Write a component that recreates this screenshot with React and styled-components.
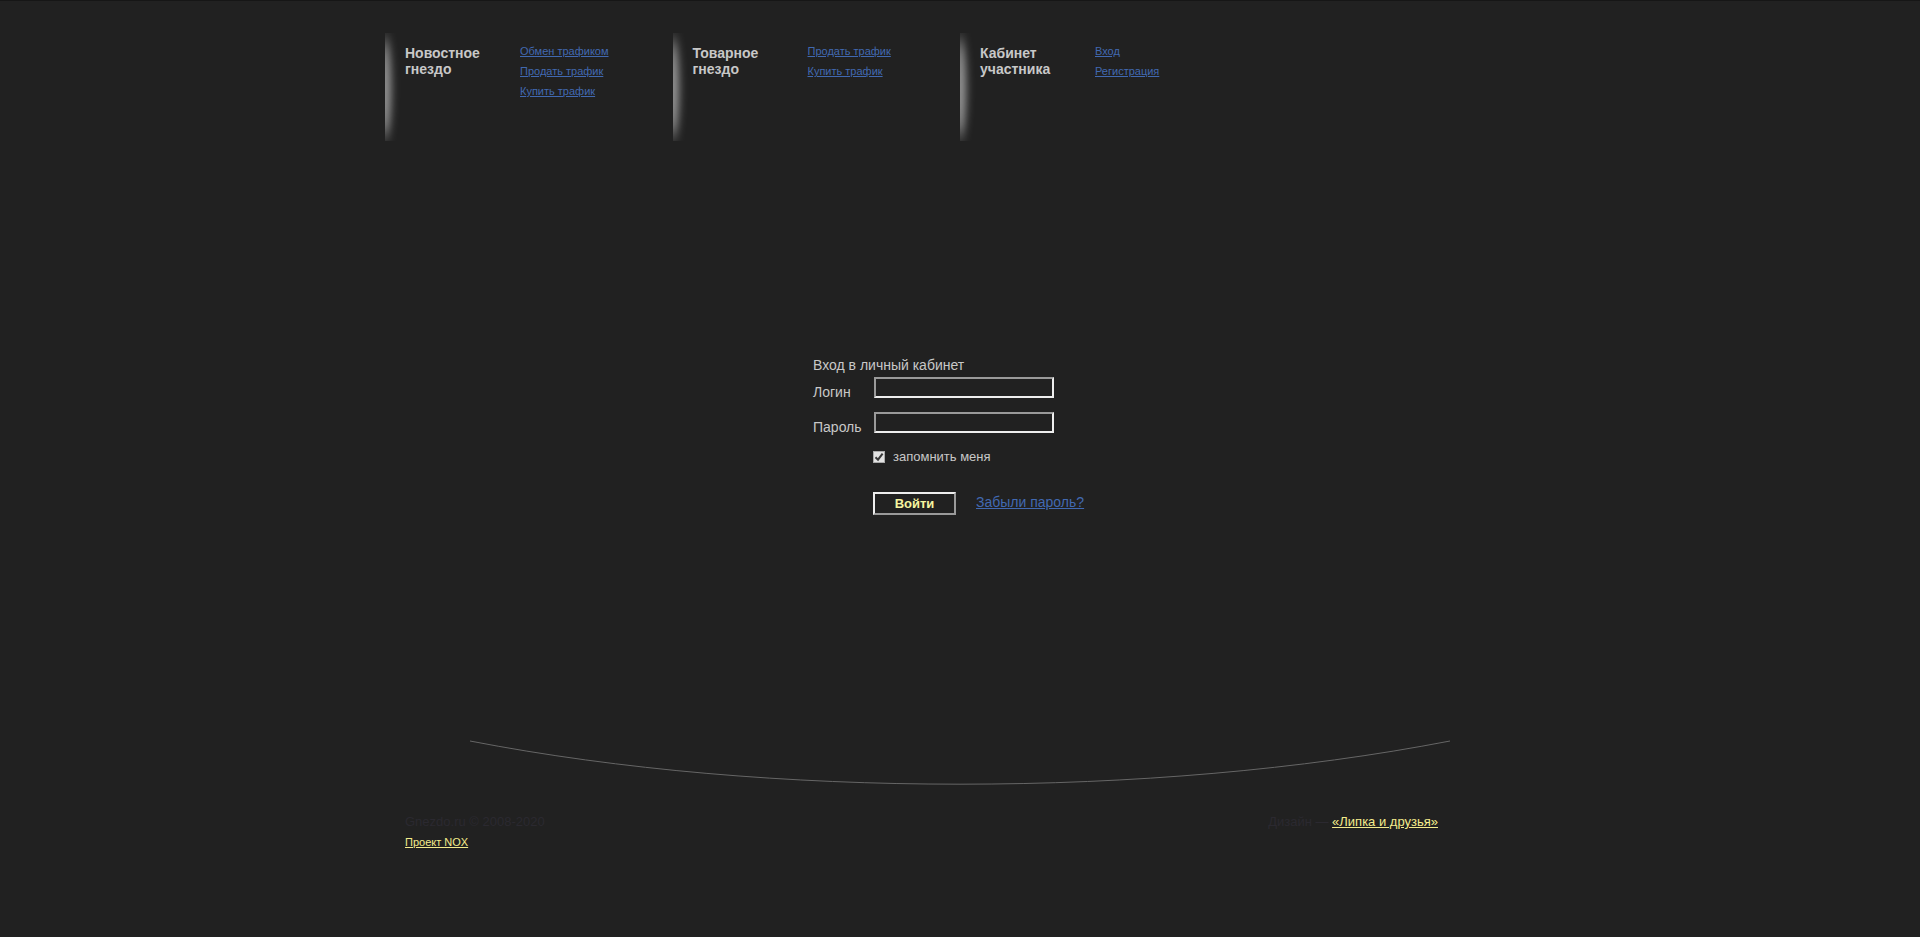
import React from "react";
import styled, { createGlobalStyle } from "styled-components";

const GlobalStyle = createGlobalStyle`
  body {
    margin: 0;
    background: #212121;
    color: #c8c8c8;
    font: 14px/16px "Liberation Sans", Arial, sans-serif;
  }
`;

const Page = styled.div`
  box-sizing: border-box;
  display: flex;
  flex-direction: column;
  align-items: center;
  min-height: 100vh;
  padding-top: 32px;
  border-top: 1px solid #161616;
`;

const Header = styled.header`
  display: grid;
  grid-template-columns: repeat(4, 1fr);
  width: 100%;
  max-width: 1150px;
`;

const Section = styled.section`
  display: grid;
  grid-template-columns: 20px 115px 1fr;
  align-items: start;
`;

const Glow = styled.svg`
  display: block;
  width: 16px;
  height: 108px;
`;

const Title = styled.h2`
  margin: 0;
  padding-top: 12px;
  font-size: 14px;
  line-height: 16px;
`;

const Links = styled.ul`
  margin: 0;
  padding: 8px 0 0;
  list-style: none;
  font-size: 11px;
  line-height: 20px;
`;

const Link = styled.a`
  color: ${(p) => (p.$accent ? "#f4ec8c" : "#4169b1")};
  font-size: ${(p) => p.$size || "inherit"};
`;

const Form = styled.form`
  display: flex;
  flex-direction: column;
  width: 294px;
  margin-top: 216px;
`;

const Heading = styled.h1`
  margin: 0 0 4px;
  font-size: 14px;
  font-weight: normal;
`;

const Field = styled.div`
  display: grid;
  grid-template-columns: 61px 180px;
  align-items: start;
  height: 35px;
`;

const Label = styled.label`
  padding-top: 7px;
`;

const TextInput = styled.input`
  box-sizing: border-box;
  width: 180px;
  height: 21px;
  margin: 0;
  padding: 0 2px;
  border: 2px solid;
  border-color: #9a9a9a #eee #eee #9a9a9a;
  background: transparent;
  color: #c8c8c8;
  font: inherit;
`;

const Remember = styled.div`
  display: flex;
  align-items: center;
  gap: 8px;
  margin: 2px 0 0 60px;
  font-size: 13px;
`;

const Checkbox = styled.input`
  appearance: none;
  box-sizing: border-box;
  width: 12px;
  height: 12px;
  margin: 0;
  border: 1px solid #aaa;
  background: #e2e2e2;
`;

const CheckWrap = styled.span`
  display: grid;
  > * {
    grid-area: 1 / 1;
  }
  svg {
    pointer-events: none;
  }
  input:not(:checked) + svg {
    visibility: hidden;
  }
`;

const Actions = styled.div`
  display: flex;
  align-items: flex-start;
  gap: 20px;
  margin: 27px 0 0 60px;
  line-height: 20px;
`;

const Submit = styled.button`
  box-sizing: border-box;
  width: 83px;
  height: 23px;
  padding: 1px 0 0;
  border: 2px solid;
  border-color: #eee #9a9a9a #9a9a9a #eee;
  background: transparent;
  color: #f5f5a0;
  font: bold 13px/18px "Liberation Sans", Arial, sans-serif;
`;

const Curve = styled.svg`
  display: block;
  width: 980px;
  max-width: 100%;
  height: 46px;
  margin-top: 225px;
`;

const Footer = styled.footer`
  box-sizing: border-box;
  display: flex;
  justify-content: space-between;
  width: 100%;
  max-width: 1150px;
  margin-top: 26px;
  padding: 0 97px 0 20px;
  color: #2b2930;
  font-size: 13px;
  line-height: 20px;
`;

const Line = styled.p`
  margin: 0;
`;

const SECTIONS = [
  { title: ["Новостное", "гнездо"], links: ["Обмен трафиком", "Продать трафик", "Купить трафик"] },
  { title: ["Товарное", "гнездо"], links: ["Продать трафик", "Купить трафик"] },
  { title: ["Кабинет", "участника"], links: ["Вход", "Регистрация"] },
];

function GlowBar({ id }) {
  return (
    <Glow viewBox="0 0 16 108" aria-hidden="true">
      <defs>
        <filter id={id} x="-200%" y="-20%" width="500%" height="140%">
          <feGaussianBlur stdDeviation="4 8" />
        </filter>
      </defs>
      <ellipse cx="0" cy="55" rx="6" ry="50" fill="#999" filter={`url(#${id})`} />
    </Glow>
  );
}

export default function App() {
  return (
    <>
      <GlobalStyle />
      <Page>
        <Header>
          {SECTIONS.map(({ title, links }, i) => (
            <Section key={title[0]}>
              <GlowBar id={`glow-${i}`} />
              <Title>
                {title[0]}
                <br />
                {title[1]}
              </Title>
              <Links>
                {links.map((text) => (
                  <li key={text}>
                    <Link href="#">{text}</Link>
                  </li>
                ))}
              </Links>
            </Section>
          ))}
        </Header>
        <Form>
          <Heading>Вход в личный кабинет</Heading>
          <Field>
            <Label htmlFor="login">Логин</Label>
            <TextInput id="login" type="text" />
          </Field>
          <Field>
            <Label htmlFor="password">Пароль</Label>
            <TextInput id="password" type="password" />
          </Field>
          <Remember>
            <CheckWrap>
              <Checkbox id="remember" type="checkbox" defaultChecked />
              <svg width="12" height="12" viewBox="0 0 12 12" aria-hidden="true">
                <path d="M2.5 6.2L5 8.7L9.6 2.6" fill="none" stroke="#383838" strokeWidth="2" />
              </svg>
            </CheckWrap>
            <label htmlFor="remember">запомнить меня</label>
          </Remember>
          <Actions>
            <Submit type="submit">Войти</Submit>
            <Link href="#">Забыли пароль?</Link>
          </Actions>
        </Form>
        <Curve viewBox="0 0 980 46" aria-hidden="true">
          <path d="M0 1C298 58.6 682 58.6 980 1" fill="none" stroke="#666" />
        </Curve>
        <Footer>
          <div>
            <Line>Gnezdo.ru © 2008-2020</Line>
            <Line>
              <Link href="#" $accent $size="11px">
                Проект NOX
              </Link>
            </Line>
          </div>
          <Line>
            Дизайн —{" "}
            <Link href="#" $accent>
              «Липка и друзья»
            </Link>
          </Line>
        </Footer>
      </Page>
    </>
  );
}
